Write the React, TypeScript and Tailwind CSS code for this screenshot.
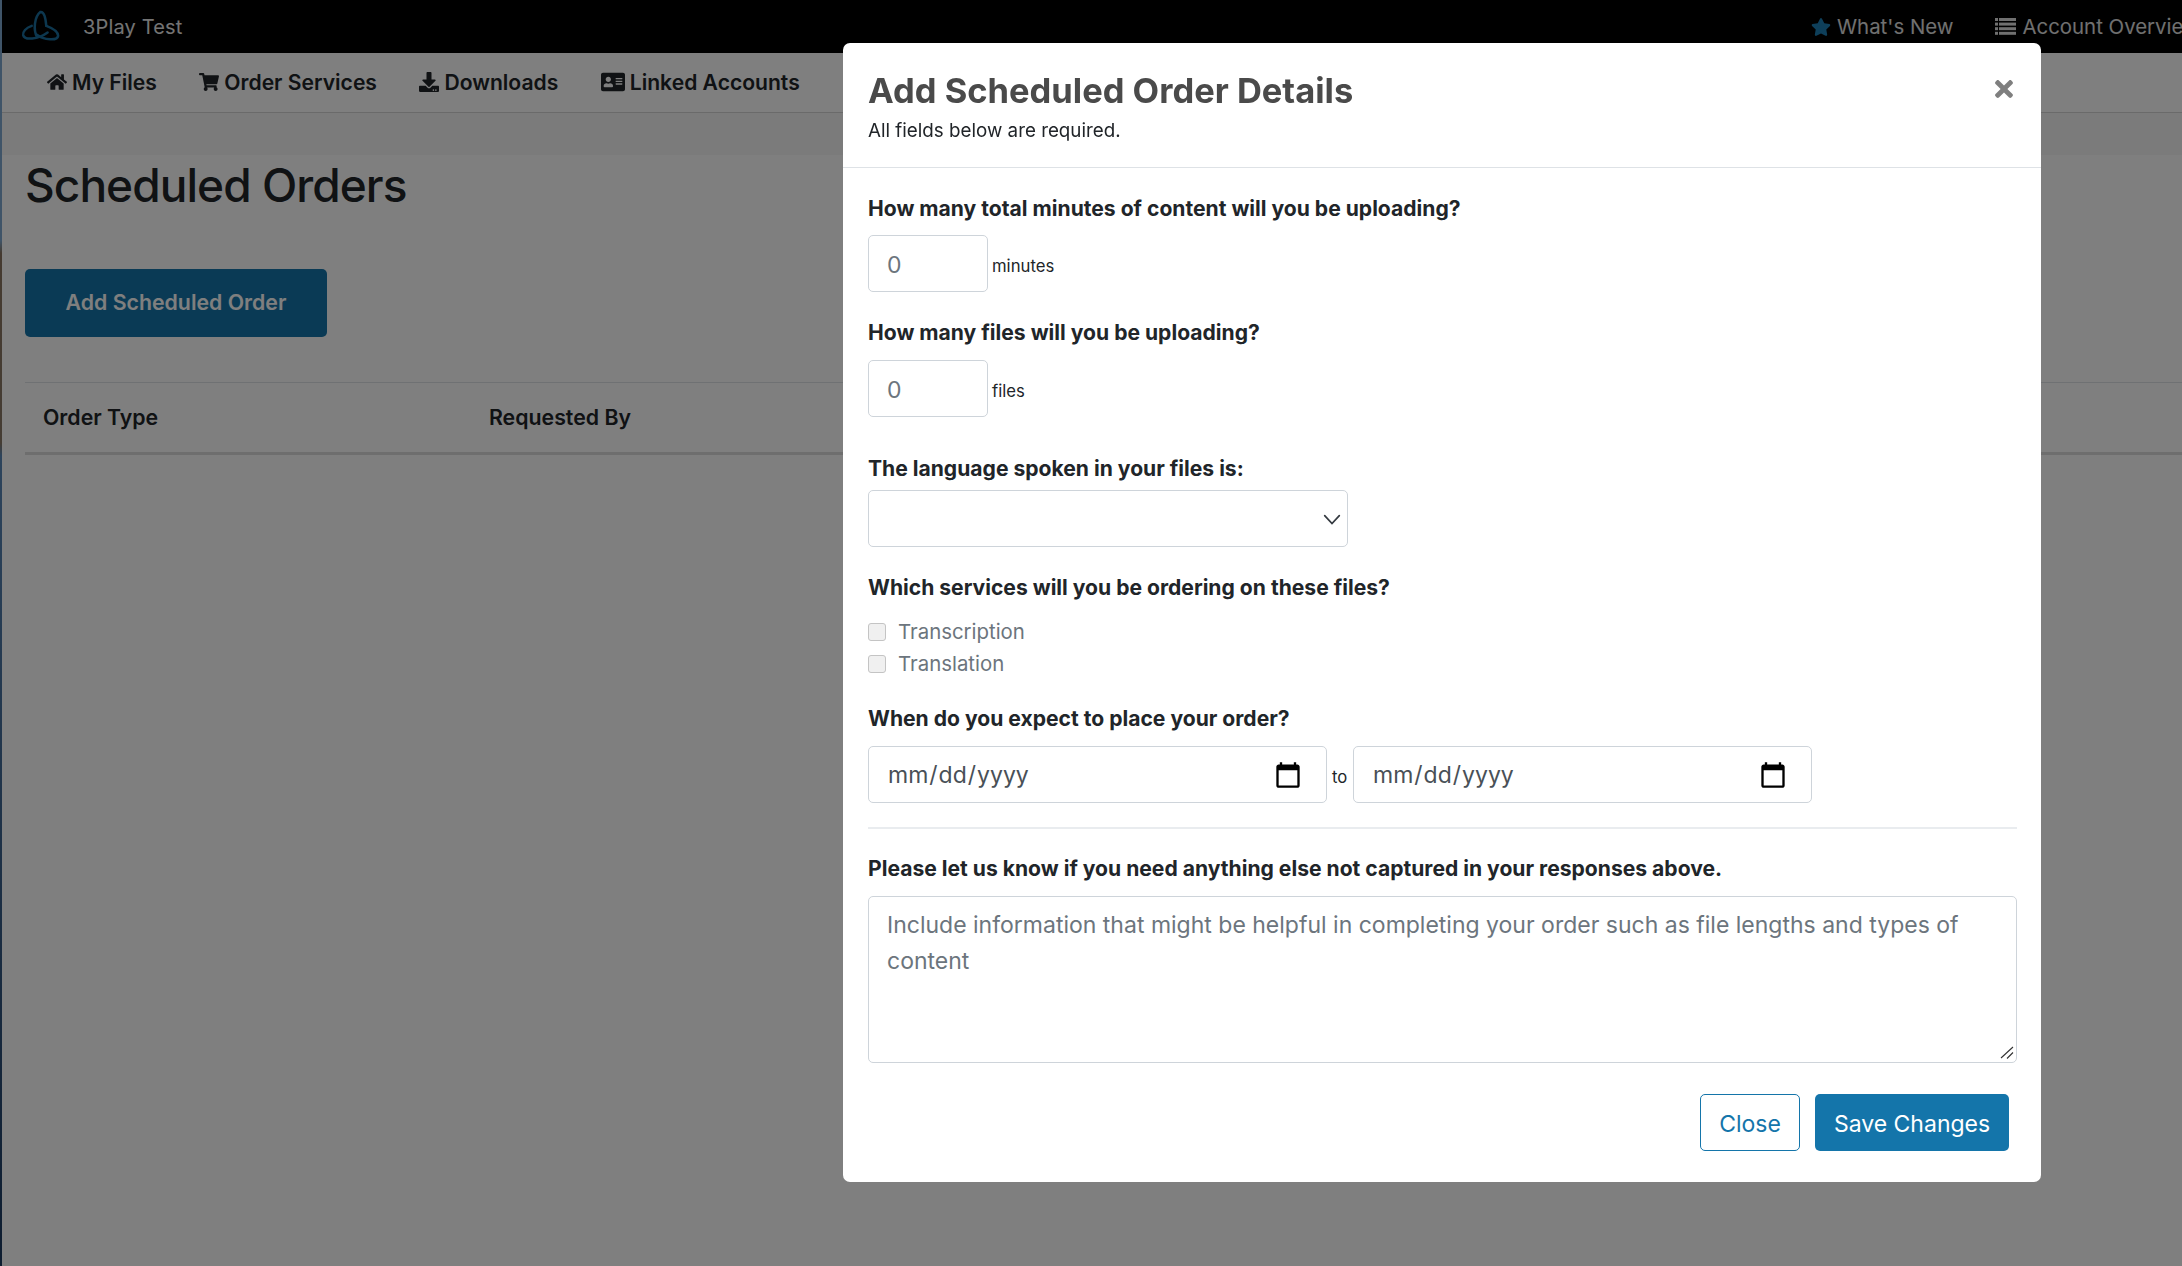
import React from "react";
import { FaAddressCard, FaDownload, FaHome, FaShoppingCart, FaStar, FaTimes } from "react-icons/fa";

const font = { fontFamily: "Inter, 'Open Sans', sans-serif" };

function Logo() {
  return (
    <svg viewBox="60 30 120 100" width="40" height="33" fill="none" stroke="#1a6f9e" strokeWidth="7.5" strokeLinecap="round">
      <path d="M108 112C96 90 100 50 118 36C130 34 134 55 136 78" />
      <path d="M92 78C74 84 64 96 66 106C70 122 110 120 140 98" />
      <path d="M136 78C155 85 172 95 172 108C170 124 130 122 106 104" />
    </svg>
  );
}

function ListIcon() {
  return (
    <svg width="21" height="17" viewBox="0 0 21 17" fill="currentColor" className="mr-[6px] ml-[42px]">
      <rect x="0" y="0" width="3" height="3" />
      <rect x="4" y="0" width="17" height="3" />
      <rect x="0" y="4.6" width="3" height="3" />
      <rect x="4" y="4.6" width="17" height="3" />
      <rect x="0" y="9.2" width="3" height="3" />
      <rect x="4" y="9.2" width="17" height="3" />
      <rect x="0" y="13.8" width="3" height="3" />
      <rect x="4" y="13.8" width="17" height="3" />
    </svg>
  );
}

function NavItem({ icon, label }: { icon: React.ReactNode; label: string }) {
  return (
    <a href="#" className="flex items-center gap-[5px] text-[21.1px] font-semibold text-[#212529]">
      {icon}
      {label}
    </a>
  );
}

function Label({ children, className }: { children: React.ReactNode; className: string }) {
  return <div className={`pt-[2px] text-[21.1px] leading-[28px] font-bold text-[#212529] ${className}`}>{children}</div>;
}

function Checkbox({ label }: { label: string }) {
  return (
    <label className="flex h-[32px] items-center gap-3 text-[20.4px] text-[#6c757d]">
      <input type="checkbox" disabled className="h-[18px] w-[18px] appearance-none rounded-[3px] border border-[#c4c4c4] bg-[#f0f0f0]" />
      {label}
    </label>
  );
}

const fieldClass =
  "h-[57px] rounded-[5px] border border-[#ced4da] bg-white px-[18px] pt-[2px] text-[23px] text-[#495057] outline-none";
const dateClass =
  "w-[459px] !pr-[23px] [&::-webkit-calendar-picker-indicator]:h-[30px] [&::-webkit-calendar-picker-indicator]:w-[30px] [&::-webkit-calendar-picker-indicator]:m-0 [&::-webkit-calendar-picker-indicator]:p-0";

export default function App() {
  return (
    <div className="flex h-[1266px] w-full overflow-hidden bg-white" style={font}>
      <div className="w-[2px] shrink-0 bg-[linear-gradient(to_bottom,#7fa8d0_0%,#7fa8d0_19%,#8a7560_20%,#8a7a68_35%,#5a88b8_36%,#1c3a60_100%)]" />
      <div className="min-w-0 flex-1">
        <header className="flex h-[53px] items-center overflow-hidden bg-black">
          <div className="flex w-[1809px] shrink-0 items-center pl-[19px]">
            <Logo />
            <span className="ml-[22px] text-[20px] tracking-[0.15px] text-[#e8e8e8]">3Play Test</span>
          </div>
          <div className="flex shrink-0 items-center whitespace-nowrap pt-[1px] text-[20.4px] text-[#e0e0e0]">
            <FaStar className="mr-[6px] text-[20px] text-[#1c7fb5]" />
            What's New
            <ListIcon />
            Account Overview
          </div>
        </header>

        <nav className="flex h-[60px] items-center gap-[42.5px] border-b border-[#d5d5d5] pl-[45px]">
          <NavItem icon={<FaHome className="text-[20px]" />} label="My Files" />
          <NavItem icon={<FaShoppingCart className="text-[20px]" />} label="Order Services" />
          <NavItem icon={<FaDownload className="text-[20px]" />} label="Downloads" />
          <NavItem icon={<FaAddressCard className="text-[24px]" />} label="Linked Accounts" />
        </nav>
        <div className="h-[42px] bg-[#f7f7f7]" />

        <main className="pl-[23px]">
          <h1 className="text-[46px] leading-[60px] font-medium tracking-[-0.94px] text-[#212529]">Scheduled Orders</h1>
          <button className="mt-[54px] h-[68px] w-[302px] rounded-[5px] bg-[#1475aa] text-[21.3px] font-semibold text-white">
            Add Scheduled Order
          </button>
          <div className="mt-[45px] flex h-[73px] items-center border-t border-b-[3px] border-t-[#dee2e6] border-b-[#dcdcdc] text-[21.3px] font-semibold text-[#212529]">
            <div className="w-[464px] pl-[18px]">Order Type</div>
            <div>Requested By</div>
          </div>
        </main>
      </div>

      <div className="fixed inset-0 bg-black/50" />

      <div className="fixed top-[43px] left-[843px] h-[1139px] w-[1198px] rounded-[7px] bg-white">
        <div className="relative h-[125px] border-b border-[#dee2e6] px-[25px] pt-[24px]">
          <h2 className="text-[34.5px] leading-[48px] font-bold text-[#4a4a4a]">Add Scheduled Order Details</h2>
          <p className="mt-[2px] text-[18.8px] leading-[27px] text-[#212529]">All fields below are required.</p>
          <button className="absolute top-[33px] right-[24px] text-[26px] text-[#7f7f7f]">
            <FaTimes />
          </button>
        </div>

        <div className="pt-[25px] pr-[24px] pl-[25px]">
          <Label className="mb-[12px]">How many total minutes of content will you be uploading?</Label>
          <div className="flex items-center gap-[4px]">
            <input readOnly value="0" className={`${fieldClass} w-[120px] !text-[#6c757d]`} />
            <span className="mt-[7px] text-[16.7px] text-[#212529]">minutes</span>
          </div>

          <Label className="mt-[25px] mb-[13px]">How many files will you be uploading?</Label>
          <div className="flex items-center gap-[4px]">
            <input readOnly value="0" className={`${fieldClass} w-[120px] !text-[#6c757d]`} />
            <span className="mt-[7px] text-[16.7px] text-[#212529]">files</span>
          </div>

          <Label className="mt-[36px] mb-[7px]">The language spoken in your files is:</Label>
          <div className={`${fieldClass} flex w-[480px] items-center justify-end !px-[6px] !pt-0`}>
            <svg width="18" height="18" viewBox="0 0 16 16" fill="none" stroke="#343a40" strokeWidth="1.5" strokeLinecap="round">
              <path d="M1.5 5l6.5 7 6.5-7" />
            </svg>
          </div>

          <Label className="mt-[25px] mb-[14px]">Which services will you be ordering on these files?</Label>
          <div className="flex flex-col">
            <Checkbox label="Transcription" />
            <Checkbox label="Translation" />
          </div>

          <Label className="mt-[23px] mb-[13px]">When do you expect to place your order?</Label>
          <div className="flex items-center">
            <input type="date" className={`${fieldClass} ${dateClass}`} />
            <span className="mx-[5px] mt-[7px] w-[16px] text-[16.7px] text-[#212529]">to</span>
            <input type="date" className={`${fieldClass} ${dateClass}`} />
          </div>

          <div className="mt-[24px] border-t-2 border-[#e9ecef]" />

          <Label className="mt-[24px] mb-[13px]">Please let us know if you need anything else not captured in your responses above.</Label>
          <div className="relative">
            <textarea
              className="block h-[167px] w-full resize-none rounded-[5px] border border-[#ced4da] px-[18px] py-[10px] text-[23px] leading-[36px] text-[#495057] outline-none placeholder:text-[#6c757d]"
              placeholder="Include information that might be helpful in completing your order such as file lengths and types of content"
            />
            <svg width="14" height="13" viewBox="0 0 14 13" fill="none" stroke="#333" strokeWidth="1.1" className="absolute right-[3px] bottom-[4px]">
              <path d="M1 12L13 1M7 12.5L13 6.5" />
            </svg>
          </div>

          <div className="mt-[31px] flex justify-end gap-[15px] pr-[8px]">
            <button className="h-[57px] w-[100px] rounded-[5px] border border-[#1475aa] pt-[3px] text-[23px] text-[#1475aa]">Close</button>
            <button className="h-[57px] w-[194px] rounded-[5px] bg-[#1475aa] pt-[3px] text-[23px] text-white">Save Changes</button>
          </div>
        </div>
      </div>
    </div>
  );
}
